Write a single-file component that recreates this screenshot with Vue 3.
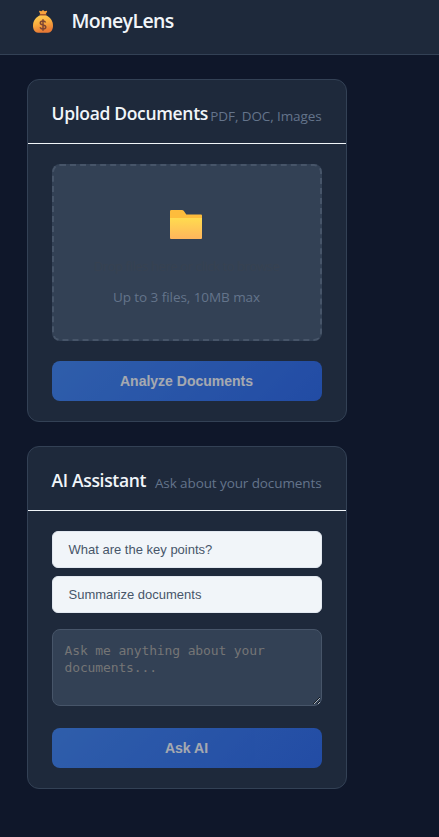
<script setup>
import { ref } from 'vue'

const suggestions = ['What are the key points?', 'Summarize documents']
const question = ref('')
</script>

<template>
  <div class="app">
    <header class="topbar">
      <svg class="bag" viewBox="0 0 22 24" aria-hidden="true">
        <defs>
          <linearGradient id="bagFill" x1="0" y1="0" x2="0.3" y2="1">
            <stop offset="0" stop-color="#ffd256" />
            <stop offset="0.5" stop-color="#fbb13f" />
            <stop offset="1" stop-color="#e87a35" />
          </linearGradient>
        </defs>
        <path d="M7.5 1.800 9.400 2.200 11 .9l1.700 1.300 2-.4c.5.1.5.5.3.9L13.500 5.400H8.500L7.200 2.700c-.2-.4-.1-.8.3-.9Z" fill="#f6a23c" />
        <path d="M8.500 6h5c4.200 1.800 7.500 5.600 7.500 10.500 0 4.500-2 7.200-5 7.200H6c-3 0-5-2.700-5-7.200C1 11.600 4.300 7.800 8.500 6Z" fill="url(#bagFill)" />
        <rect x="7.500" y="4.900" width="7" height="1.600" rx=".8" fill="#a5572f" />
        <path d="M13.600 13.500c-.4-1-1.300-1.500-2.600-1.500-1.600 0-2.700.7-2.700 1.900 0 2.800 5.500 1.200 5.500 4.100 0 1.300-1.100 2-2.800 2-1.500 0-2.500-.6-2.900-1.700M11 10.300v11.400" fill="none" stroke="#7d4533" stroke-width="1.500" />
      </svg>
      <h1 class="brand">MoneyLens</h1>
    </header>

    <main class="content">
      <section class="card">
        <div class="card-head">
          <h2 class="title title-upload">Upload Documents</h2>
          <span class="hint hint-upload">PDF, DOC, Images</span>
        </div>
        <div class="card-body">
          <div class="dropzone">
            <svg class="folder" viewBox="0 0 32 30" aria-hidden="true">
              <defs>
                <linearGradient id="folderFill" x1="0" y1="0" x2="0" y2="1">
                  <stop offset="0" stop-color="#ffdb4f" />
                  <stop offset="1" stop-color="#ffb55c" />
                </linearGradient>
              </defs>
              <path d="M0 10V1.300Q0 0 1.300 0H12q1 0 1.700.8L16.300 4.500H31q1 0 1 1V10Z" fill="#fdbc3c" />
              <path d="M0 8h32V28q0 1-1 1H1Q0 29 0 28Z" fill="url(#folderFill)" />
            </svg>
            <p class="drop-text">Drop files here or click to browse</p>
            <p class="limit">Up to 3 files, 10MB max</p>
          </div>
          <button class="primary" disabled>Analyze Documents</button>
        </div>
      </section>

      <section class="card">
        <div class="card-head">
          <h2 class="title title-ai">AI Assistant</h2>
          <span class="hint hint-ai">Ask about your documents</span>
        </div>
        <div class="card-body">
          <div class="suggestions">
            <button v-for="s in suggestions" :key="s" class="suggestion">{{ s }}</button>
          </div>
          <textarea v-model="question" class="question" placeholder="Ask me anything about your documents..."></textarea>
          <button class="primary" disabled>Ask AI</button>
        </div>
      </section>
    </main>
  </div>
</template>

<style>
body {
  margin: 0;
  background: #0f172a;
}
</style>

<style scoped>
.app {
  min-height: 837px;
  box-sizing: border-box;
  background: #0f172a;
  font-family: "Open Sans", "Noto Sans", sans-serif;
}

.topbar {
  display: flex;
  align-items: flex-start;
  height: 45px;
  padding: 9px 32px 0;
  background: #1e293b;
  border-bottom: 1px solid #334155;
}

.bag {
  width: 22px;
  height: 24px;
  flex: none;
}

.brand {
  margin: -2px 0 0 17.500px;
  font-size: 19.500px;
  line-height: 28px;
  font-weight: 650;
  letter-spacing: -0.6px;
  color: #f1f5f9;
}

.content {
  display: flex;
  flex-direction: column;
  gap: 24px;
  width: 320px;
  padding: 24px 0 0 26.500px;
}

.card {
  background: #1e293b;
  border: 1px solid #334155;
  border-radius: 12px;
}

.card-head {
  display: flex;
  align-items: center;
  justify-content: space-between;
  height: 63px;
  padding: 0 24px;
  border-bottom: 1px solid #f1f5f9;
  white-space: nowrap;
}

.title {
  margin: 3px 0 0;
  font-size: 17.500px;
  line-height: 24px;
  font-weight: 600;
  letter-spacing: -0.33px;
  color: #f1f5f9;
}

.hint {
  margin-top: 9px;
  font-size: 13.500px;
  line-height: 20px;
  letter-spacing: -0.1px;
  color: #64748b;
}

.card-body {
  display: flex;
  flex-direction: column;
  padding: 20px 24px;
}

.dropzone {
  display: flex;
  flex-direction: column;
  align-items: center;
  box-sizing: border-box;
  height: 177px;
  margin-bottom: 20px;
  padding-top: 44px;
  background: #334155;
  border: 2px dashed #475569;
  border-radius: 8px;
}

.folder {
  width: 32px;
  height: 30px;
  margin-right: 1px;
}

.drop-text {
  margin: 14px 0 0;
  font-size: 13px;
  line-height: 24px;
  font-weight: 500;
  letter-spacing: -0.4px;
  color: #374151;
  white-space: nowrap;
}

.limit {
  margin: 9px 0 0;
  font-size: 13.500px;
  line-height: 20px;
  letter-spacing: -0.06px;
  color: #64748b;
}

.primary {
  height: 40px;
  padding: 0;
  border: 0;
  border-radius: 8px;
  background: linear-gradient(135deg, #3b82f6, #2563eb);
  color: #fff;
  font: 700 14px "Liberation Sans", sans-serif;
  opacity: 0.6;
}

.suggestions {
  display: flex;
  flex-direction: column;
  gap: 8px;
  margin-bottom: 16px;
}

.suggestion {
  height: 37px;
  padding: 0 16px;
  border: 1px solid #e2e8f0;
  border-radius: 6px;
  background: #f1f5f9;
  color: #475569;
  font: 13px "Liberation Sans", sans-serif;
  text-align: left;
}

.question {
  display: block;
  box-sizing: border-box;
  width: 100%;
  height: 77px;
  margin: 0 0 22px;
  padding: 12px;
  border: 1px solid #475569;
  border-radius: 8px;
  background: #334155;
  color: #f1f5f9;
  font: 13px/17px "DejaVu Sans Mono", monospace;
  letter-spacing: -0.13px;
  resize: vertical;
}

.question::placeholder {
  color: #757575;
}
</style>
